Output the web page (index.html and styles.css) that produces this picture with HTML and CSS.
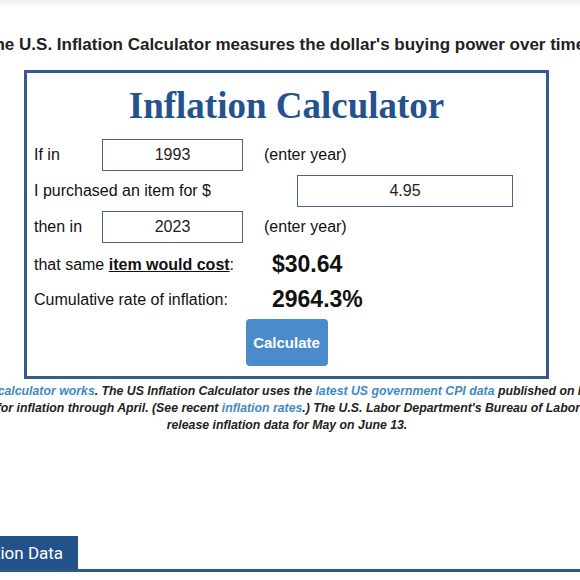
FILE: index.html
```html
<!DOCTYPE html>
<html lang="en">
<head>
<meta charset="utf-8">
<title>Inflation Calculator</title>
<link rel="stylesheet" href="styles.css">
</head>
<body>
<div class="topshade"></div>
<main class="page">
  <div class="wide">
    <p class="intro">The U.S. Inflation Calculator measures the dollar's buying power over time.</p>
  </div>
  <section class="calc">
    <h1 class="calc-title">Inflation Calculator</h1>
    <div class="row">
      <span class="label label-year">If in</span>
      <span class="field field-year">1993</span>
      <span class="hint">(enter year)</span>
    </div>
    <div class="row">
      <span class="label label-amount">I purchased an item for $</span>
      <span class="field field-amount">4.95</span>
    </div>
    <div class="row">
      <span class="label label-year">then in</span>
      <span class="field field-year">2023</span>
      <span class="hint">(enter year)</span>
    </div>
    <div class="row result-row">
      <span class="label label-result">that same <a class="strong-link">item would cost</a>:</span>
      <span class="result">$30.64</span>
    </div>
    <div class="row result-row">
      <span class="label label-result">Cumulative rate of inflation:</span>
      <span class="result">2964.3%</span>
    </div>
    <div class="actions">
      <button class="btn" type="button">Calculate</button>
    </div>
  </section>
  <div class="wide">
    <p class="note">
      <span class="line line-first">Read how our <a class="link">calculator works</a>. The US Inflation Calculator uses the <a class="link">latest US government CPI data</a> published on May 10, 2023</span>
      <span class="line line-second">for inflation through April. (See recent <a class="link">inflation rates</a>.) The U.S. Labor Department's Bureau of Labor Statistics will</span>
      <span class="line">release inflation data for May on June 13.</span>
    </p>
  </div>
  <nav class="tabs">
    <span class="tab">Inflation Data</span>
  </nav>
</main>
</body>
</html>
```
FILE: styles.css
```css
html, body {
  margin: 0;
  padding: 0;
  background: #ffffff;
}
body {
  width: 580px;
  height: 580px;
  overflow: hidden;
  font-family: "Liberation Sans", Arial, sans-serif;
  color: #111;
}
.topshade {
  height: 8px;
  background: linear-gradient(#efefef, #ffffff);
}
.page {
  display: flex;
  flex-direction: column;
}
.wide {
  width: 900px;
  margin-left: -163px;
  text-align: center;
}
.intro {
  margin: 27px 0 0;
  font-size: 17px;
  line-height: 20px;
  font-weight: bold;
  color: #222;
  white-space: nowrap;
}
.calc {
  box-sizing: border-box;
  width: 525px;
  margin: 15px 0 0 24px;
  border: 3px solid #375a8c;
  padding: 11px 0 10px 7px;
}
.calc-title {
  margin: 0 0 11px;
  font-family: "Liberation Serif", "Times New Roman", serif;
  font-size: 37px;
  line-height: 44px;
  font-weight: bold;
  color: #23528f;
  text-align: center;
  padding-right: 7px;
}
.row {
  display: flex;
  align-items: center;
  height: 32px;
  margin-bottom: 4px;
  font-size: 16px;
}
.label {
  flex: none;
}
.label-year { width: 68px; }
.label-amount { width: 263px; }
.label-result { width: 238px; }
.field {
  box-sizing: border-box;
  height: 32px;
  border: 1px solid #4f6584;
  display: flex;
  align-items: center;
  justify-content: center;
  color: #222;
}
.field-year { width: 141px; }
.field-amount { width: 216px; }
.hint {
  margin-left: 21px;
}
.result-row {
  height: 35px;
  margin-bottom: 0;
}
.result {
  font-size: 23px;
  font-weight: bold;
  color: #111;
}
.strong-link {
  font-weight: bold;
  text-decoration: underline;
  color: #111;
}
.actions {
  display: flex;
  justify-content: center;
  margin-top: 2px;
  padding-right: 7px;
}
.btn {
  width: 82px;
  height: 47px;
  border: none;
  border-radius: 4px;
  background: #4a8bcb;
  color: #fff;
  font-family: "Liberation Sans", Arial, sans-serif;
  font-weight: bold;
  font-size: 15px;
  padding: 0;
}
.note {
  margin: 4px 0 0;
  font-size: 12.3px;
  line-height: 17px;
  font-weight: bold;
  font-style: italic;
  color: #222;
}
.line {
  display: block;
  white-space: nowrap;
}
.line-first {
  padding-right: 8px;
}
.line-second {
  padding-left: 84px;
}
.link {
  color: #3f8ac2;
}
.tabs {
  margin-top: 102px;
  border-bottom: 3px solid #2a5a80;
  display: flex;
}
.tab {
  margin-left: -50px;
  padding: 0 15px 0 12px;
  height: 33px;
  display: flex;
  align-items: center;
  background: #225289;
  color: #fff;
  font-family: Roboto, "Liberation Sans", sans-serif;
  font-size: 17px;
}
```
